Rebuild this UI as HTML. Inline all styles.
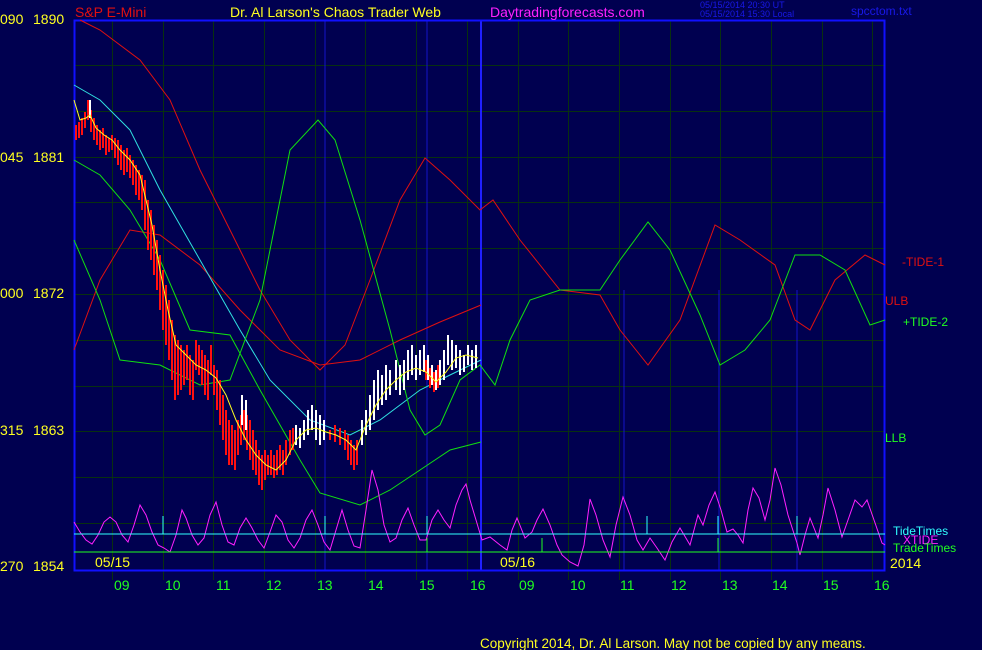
<!DOCTYPE html>
<html><head><meta charset="utf-8"><style>
html,body{margin:0;padding:0;background:#000050;}
svg{display:block;font-family:"Liberation Sans",sans-serif;}
</style></head><body>
<svg width="982" height="650" viewBox="0 0 982 650" xmlns="http://www.w3.org/2000/svg">
<rect width="982" height="650" fill="#000050"/>
<path stroke="#083010" stroke-width="1" fill="none" d="M74 65.5H885M74 111.5H885M74 157.5H885M74 202.5H885M74 248.5H885M74 294.5H885M74 340.5H885M74 386.5H885M74 431.5H885M74 477.5H885M74 523.5H885
M112.5 20V580M163.5 20V580M213.5 20V580M264.5 20V580M315.5 20V580M365.5 20V580M416.5 20V580M467.5 20V580M518.5 20V580M568.5 20V580M619.5 20V580M670.5 20V580M720.5 20V580M771.5 20V580M822.5 20V580M872.5 20V580"/>
<g stroke="#1414c8" stroke-width="1">
<line x1="325" y1="20" x2="325" y2="570"/><line x1="427" y1="20" x2="427" y2="570"/>
<line x1="624" y1="290" x2="624" y2="570"/><line x1="719" y1="290" x2="719" y2="570"/><line x1="797" y1="290" x2="797" y2="570"/>
</g>
<line x1="481" y1="20" x2="481" y2="570" stroke="#2020ff" stroke-width="2"/>
<rect x="74.5" y="20.5" width="810" height="550" fill="none" stroke="#1010ff" stroke-width="2"/>
<g fill="none" stroke-width="1">
<polyline stroke="#e01010" points="80,20 100,30 140,60 170,100 200,170 230,230 260,290 290,340 320,370 345,345 370,280 400,200 425,158 450,180 480,210 493,200 520,240 560,290 600,295 620,330 648,365 680,320 715,225 740,240 775,265 795,320 810,330 835,280 865,255 885,265"/>
<polyline stroke="#e01010" points="74,350 100,280 130,230 160,235 200,265 240,310 280,350 320,365 360,360 400,340 440,322 481,305"/>
<polyline stroke="#30e0e0" points="74,85 100,100 130,130 160,190 200,260 240,330 270,380 310,420 350,435 380,420 420,390 450,375 481,360"/>
<polyline stroke="#10e010" points="74,160 100,175 130,210 160,260 190,330 230,335 260,390 300,460 320,493 360,505 390,490 420,470 450,450 481,442"/>
<polyline stroke="#10e010" points="74,240 100,300 120,360 160,365 200,385 230,380 260,300 290,150 318,120 335,140 360,220 390,330 410,410 425,435 440,425 460,380 480,365 495,385 510,340 530,300 560,290 600,290 620,260 648,222 670,250 700,315 720,365 745,350 770,320 795,255 820,255 845,270 870,325 885,320"/>
</g>
<path fill="none" stroke="#ff1010" stroke-width="2" d="M76 125V140M79 122V138M82 118V135M85 112V128M88 100V120M91 110V132M94 118V140M97 125V145M100 130V150M103 128V148M106 135V155M109 138V152M112 135V150M115 138V158M118 140V165M121 145V170M124 150V175M127 148V172M130 155V178M133 160V185M136 165V195M139 170V200M142 175V210M145 180V230M148 200V250M151 210V260M154 225V275M157 240V290M160 255V310M163 270V330M166 285V345M169 300V360M172 320V380M175 335V400M178 340V395M181 345V390M184 350V385M187 345V380M190 355V395M193 360V400M196 340V370M199 345V375M202 350V385M205 355V395M208 360V400M211 345V375M214 365V395M217 370V410M220 380V425M223 395V440M226 410V455M229 420V465M232 425V465M235 430V470M238 420V455M241 415V445M244 410V440M247 415V450M250 420V460M253 430V470M256 440V475M259 450V485M262 455V490M265 450V480M268 455V475M271 450V475M274 455V478M277 450V475M280 445V470M283 450V475M286 440V465M290 430V455M293 428V450M330 430V440M335 425V442M340 428V445M345 430V450M348 435V460M351 440V465M354 445V470M357 440V465"/>
<path fill="none" stroke="#ffffff" stroke-width="2" d="M90 100V118M242 395V425M246 400V430M296 425V445M300 428V448M304 420V440M308 410V435M312 405V430M316 410V440M320 415V445M324 420V440M362 420V445M366 410V435M370 395V430M374 380V420M378 370V410M382 375V405M386 365V400M390 370V395M396 360V390M400 365V395M404 360V390M408 350V380M412 345V375M416 355V380M420 350V375M424 345V372M428 355V380M432 365V385M436 370V390M440 360V385M444 350V380M448 335V365M452 340V370M456 345V368M460 350V375M464 355V372M468 345V365M472 350V370M476 345V368"/>
<path fill="none" stroke="#ff1010" stroke-width="2" d="M426 360V380M430 368V388M434 372V392M438 365V388"/>
<polyline fill="none" stroke="#ffff20" stroke-width="1" points="74,100 80,120 86,118 90,115 96,128 104,135 112,140 120,150 130,160 140,175 146,200 152,225 160,270 168,310 176,345 186,355 196,365 206,370 216,378 226,395 236,420 246,440 256,455 266,465 276,470 286,460 296,440 306,430 316,428 326,432 336,435 346,440 356,450 366,425 376,405 386,390 396,380 406,372 416,368 426,372 436,382 446,372 456,358 466,355 478,358"/>
<polyline fill="none" stroke="#ff20ff" stroke-width="1" points="74,522 80,532 86,540 92,544 98,535 104,522 110,517 116,522 122,535 128,542 134,525 140,505 146,515 152,532 158,545 164,548 170,552 176,535 182,510 186,518 192,535 198,545 204,538 210,515 216,502 222,525 228,542 234,545 240,528 246,518 252,528 258,540 264,548 270,532 276,515 282,522 288,540 294,548 300,538 306,520 312,510 318,525 324,542 330,550 336,530 342,510 348,530 354,546 360,548 366,510 372,470 378,490 384,525 390,542 396,538 402,520 408,508 414,525 420,540 426,540 432,520 438,510 444,520 450,528 456,505 462,490 466,484 470,500 476,520 482,540 490,537 500,545 507,550 512,530 517,518 525,538 532,532 537,520 543,509 550,525 557,545 562,555 570,562 578,566 584,545 590,499 596,515 603,540 610,557 616,525 623,497 630,515 637,540 643,550 650,538 657,548 665,560 672,542 680,528 690,545 698,515 703,525 709,505 715,492 721,510 727,532 733,529 738,535 743,543 748,510 753,488 759,498 765,520 770,500 775,468 781,485 788,515 797,543 800,555 805,535 810,518 818,538 823,515 828,488 835,510 842,537 848,520 855,500 862,507 867,500 874,520 882,543 885,545"/>
<polyline stroke="#30ffff" fill="none" points="74,534 885,534"/>
<polyline stroke="#20ff20" fill="none" points="74,552 885,552"/>
<g stroke="#30ffff"><line x1="163" y1="516" x2="163" y2="534"/><line x1="325" y1="516" x2="325" y2="534"/><line x1="427" y1="516" x2="427" y2="534"/><line x1="647" y1="516" x2="647" y2="534"/><line x1="718" y1="516" x2="718" y2="534"/><line x1="797" y1="516" x2="797" y2="534"/></g>
<g stroke="#20ff20"><line x1="542" y1="538" x2="542" y2="552"/><line x1="718" y1="538" x2="718" y2="552"/><line x1="427" y1="538" x2="427" y2="552"/></g>
<g font-size="14" fill="#ffff20">
<text x="0" y="24">090</text><text x="33" y="24">1890</text>
<text x="0" y="162">045</text><text x="33" y="162">1881</text>
<text x="0" y="298">000</text><text x="33" y="298">1872</text>
<text x="0" y="435">315</text><text x="33" y="435">1863</text>
<text x="0" y="571">270</text><text x="33" y="571">1854</text>
<text x="95" y="567">05/15</text><text x="500" y="567">05/16</text>
<text x="890" y="568">2014</text>
<text x="480" y="648" font-size="13.5">Copyright 2014, Dr. Al Larson. May not be copied by any means.</text>
<text x="230" y="17" font-size="14">Dr. Al Larson's Chaos Trader Web</text>
</g>
<g font-size="14" fill="#20ff20">
<text x="114" y="590">09</text><text x="165" y="590">10</text><text x="216" y="590">11</text><text x="266" y="590">12</text><text x="317" y="590">13</text><text x="368" y="590">14</text><text x="419" y="590">15</text><text x="470" y="590">16</text>
<text x="519" y="590">09</text><text x="570" y="590">10</text><text x="620" y="590">11</text><text x="671" y="590">12</text><text x="722" y="590">13</text><text x="772" y="590">14</text><text x="823" y="590">15</text><text x="874" y="590">16</text>
</g>
<text x="75" y="17" font-size="14" fill="#e01010">S&amp;P E-Mini</text>
<text x="490" y="17" font-size="14" fill="#ff20ff">Daytradingforecasts.com</text>
<text x="700" y="8" font-size="9" fill="#1818e8">05/15/2014 20:30  UT</text>
<text x="700" y="17" font-size="9" fill="#1818e8">05/15/2014 15:30  Local</text>
<text x="851" y="15" font-size="12" fill="#1818e8">spcctom.txt</text>
<g font-size="12">
<text x="902" y="266" fill="#e01010">-TIDE-1</text>
<text x="885" y="305" fill="#e01010">ULB</text>
<text x="903" y="326" fill="#20ff20">+TIDE-2</text>
<text x="885" y="442" fill="#20ff20">LLB</text>
<text x="893" y="535" fill="#30ffff">TideTimes</text>
<text x="903" y="544" fill="#ff20ff">XTIDE</text>
<text x="893" y="552" fill="#20ff20">TradeTimes</text>
</g>
</svg>
</body></html>
